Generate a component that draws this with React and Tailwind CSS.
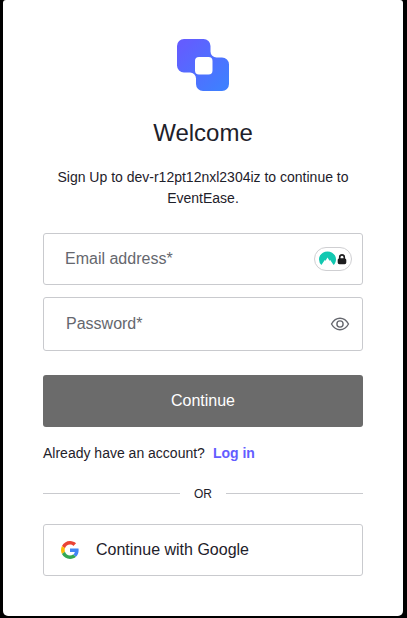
function Logo() {
  return (
    <svg width="52" height="52" viewBox="0 0 52 52" className="block" aria-hidden="true">
      <defs>
        <linearGradient id="brand" x1="0" y1="0" x2="52" y2="52" gradientUnits="userSpaceOnUse">
          <stop offset="0.1" stopColor="#635dff" />
          <stop offset="0.9" stopColor="#3f7fff" />
        </linearGradient>
      </defs>
      <path
        fill="url(#brand)"
        fillRule="evenodd"
        d="M7 0H26.500A7 7 0 0 1 33.500 7V12.500A6 6 0 0 0 39.500 18.500H45A7 7 0 0 1 52 25.500V45A7 7 0 0 1 45 52H26A7 7 0 0 1 19 45V39.500A6 6 0 0 0 13 33.500H7A7 7 0 0 1 0 26.500V7A7 7 0 0 1 7 0Z M22 18A4 4 0 0 0 18 22V31.500A4 4 0 0 0 22 35.500H31.500A4 4 0 0 0 35.500 31.500V22A4 4 0 0 0 31.500 18Z"
      />
    </svg>
  );
}

function PasswordManagerBadge() {
  return (
    <span className="flex h-6 w-[38px] shrink-0 items-center justify-center rounded-full border border-[#cfcfd2] bg-white">
      <svg width="28" height="16" viewBox="0 0 28 16" aria-hidden="true">
        <path
          fill="#12c8b1"
          d="M2.400 14A8.400 8.400 0 0 1 0 8.400C0 3.800 3.900.5 8.500.5S17 3.800 17 8.400c0 2.100-.9 4.100-2.400 5.600L11.200 9l-.7.8-2-3.200-2 3.200-.7-.8Z"
        />
        <path
          fill="#1d1d1f"
          fillRule="evenodd"
          d="M19.900 7.400V6.200a3.100 3.100 0 0 1 6.200 0v1.200q1.200.4 1.200 1.500v2.600q0 1.700-1.700 1.700h-5.200q-1.700 0-1.700-1.700V8.900q0-1.100 1.200-1.500Zm1.600-.2h3v-1a1.500 1.500 0 0 0-3 0Z"
        />
      </svg>
    </span>
  );
}

function EyeIcon() {
  return (
    <svg width="20" height="16" viewBox="0 0 20 16" fill="none" stroke="#65676e" strokeWidth="1.4" strokeLinejoin="round" aria-hidden="true">
      <path d="M1.500 8C3.600 4.200 6.500 2.200 10 2.200s6.400 2 8.500 5.800c-2.100 3.800-5 5.800-8.500 5.800S3.600 11.800 1.500 8Z" />
      <circle cx="10" cy="8" r="3.100" />
    </svg>
  );
}

function GoogleIcon() {
  return (
    <svg width="18" height="18" viewBox="0 0 48 48" aria-hidden="true">
      <path fill="#EA4335" d="M24 9.500c3.540 0 6.710 1.220 9.210 3.600l6.850-6.850C35.900 2.380 30.470 0 24 0 14.620 0 6.510 5.380 2.560 13.220l7.980 6.190C12.430 13.720 17.740 9.500 24 9.500z" />
      <path fill="#4285F4" d="M46.980 24.550c0-1.570-.15-3.090-.38-4.550H24v9.020h12.940c-.58 2.960-2.260 5.480-4.780 7.180l7.730 6c4.510-4.180 7.090-10.360 7.090-17.650z" />
      <path fill="#FBBC05" d="M10.530 28.590c-.48-1.450-.76-2.990-.76-4.590s.27-3.140.76-4.590l-7.980-6.190C.92 16.460 0 20.120 0 24c0 3.880.92 7.540 2.560 10.780l7.970-6.190z" />
      <path fill="#34A853" d="M24 48c6.480 0 11.930-2.130 15.890-5.810l-7.730-6c-2.150 1.450-4.920 2.300-8.160 2.300-6.260 0-11.570-4.220-13.470-9.910l-7.980 6.190C6.510 42.620 14.620 48 24 48z" />
    </svg>
  );
}

const inputClass =
  "h-full min-w-0 flex-1 bg-transparent text-base text-[#1e212a] outline-none placeholder:text-[#65676e]";

export default function App() {
  return (
    <div className="h-[618px] w-[407px] overflow-hidden bg-black pl-[3px] font-['Liberation_Sans',Arial,sans-serif] text-[#1e212a]">
      <main className="h-[616px] w-[400px] rounded-t-[3px] rounded-b-[5px] bg-white px-10 pt-[39px]">
        <header className="flex flex-col items-center">
          <Logo />
          <h1 className="mt-6 text-2xl leading-9">Welcome</h1>
          <p className="mt-4 text-center text-sm leading-[21px]">
            Sign Up to dev-r12pt12nxl2304iz to continue to EventEase.
          </p>
        </header>

        <form className="mt-6">
          <div className="flex h-[52px] items-center rounded-[3px] border border-[#c9cace] pr-2.5 pl-[21px]">
            <input className={inputClass} type="email" placeholder="Email address*" />
            <PasswordManagerBadge />
          </div>
          <div className="mt-3 flex h-[54px] items-center rounded-[3px] border border-[#c9cace] pr-3 pl-[22px]">
            <input className={inputClass} type="password" placeholder="Password*" />
            <button type="button" aria-label="Show password">
              <EyeIcon />
            </button>
          </div>
          <button type="button" className="mt-6 block h-[52px] w-full rounded-[3px] bg-[#6b6b6b] text-base text-white">
            Continue
          </button>
        </form>

        <p className="mt-4 text-sm leading-[21px]">
          Already have an account?
          <a className="ml-2 font-bold text-[#635dff]">Log in</a>
        </p>

        <div className="mt-5 flex h-[19px] items-center text-xs">
          <span className="h-px flex-1 bg-[#c9cace]" />
          <span className="w-[46px] text-center leading-5">OR</span>
          <span className="h-px flex-1 bg-[#c9cace]" />
        </div>

        <button type="button" className="mt-[21px] flex h-[52px] w-full items-center gap-[17px] rounded-[3px] border border-[#c9cace] pl-[17px] text-base">
          <GoogleIcon />
          Continue with Google
        </button>
      </main>
    </div>
  );
}
